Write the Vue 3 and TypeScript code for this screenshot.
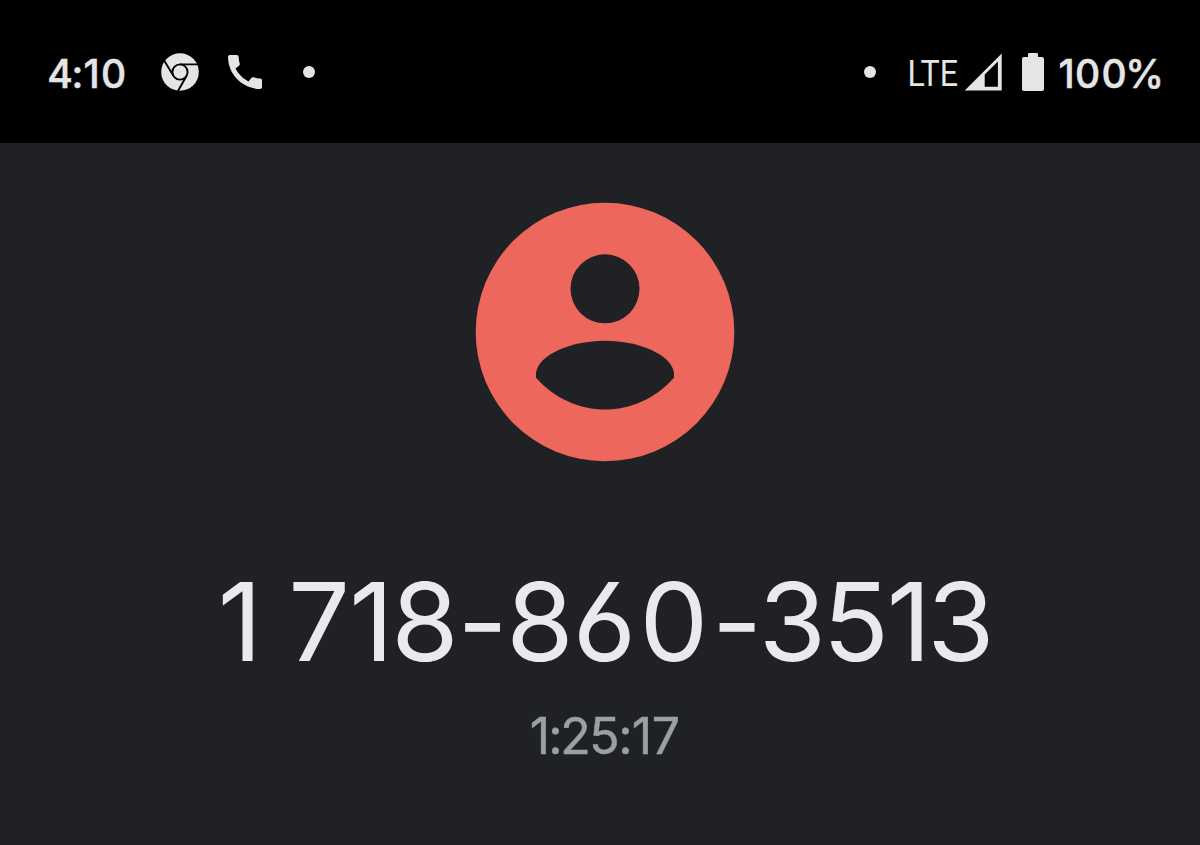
<script setup lang="ts">
const phoneNumber = '1 718-860-3513'
const duration = '1:25:17'
const clock = '4:10'
const battery = '100%'

const numberX = [20, 50, 99, 151.5, 205, 262.5, 320, 384.5, 454, 517, 572.5, 636, 689, 741].join(' ')
const durationX = [10, 25.5, 45.5, 74.5, 95.5, 112, 136].join(' ')
const clockX = [12, 29.5, 43.5, 65.5].join(' ')
const batteryX = [8.5, 29.5, 56, 86.5].join(' ')
</script>

<template>
  <main class="phone">
    <header class="status">
      <svg class="clock" width="78" height="48" viewBox="0 0 78 48">
        <text class="status-text" :x="clockX" y="39.5">{{ clock }}</text>
      </svg>
      <svg class="chrome" width="38" height="38" viewBox="-19 -19 38 38">
        <circle r="18.8" fill="#e5e5e5" />
        <g fill="none" stroke="#000" stroke-width="1.9">
          <circle r="7.6" />
          <path d="M0-7.6H19M-6.6 3.8-15.7-11.3M6.6 3.8-2 19" />
        </g>
      </svg>
      <svg class="call" width="34" height="34" viewBox="3 3 18 18">
        <path fill="#e5e5e5" d="M20.01 15.38c-1.23 0-2.42-.2-3.53-.56-.35-.12-.74-.03-1.01.24l-1.57 1.97c-2.83-1.35-5.48-3.9-6.89-6.83l1.95-1.66c.27-.28.35-.67.24-1.02-.37-1.11-.56-2.3-.56-3.53 0-.54-.45-.99-.99-.99H4.19C3.65 3 3 3.24 3 3.99 3 13.28 10.73 21 20.01 21c.71 0 .99-.63.99-1.18v-3.45c0-.54-.45-.99-.99-.99z" />
      </svg>
      <i class="dot"></i>
      <span class="space"></span>
      <i class="dot"></i>
      <svg class="lte" width="50" height="48" viewBox="0 0 50 48">
        <text x="-1.5" y="37.5" textLength="50.5" lengthAdjust="spacingAndGlyphs">LTE</text>
      </svg>
      <svg class="signal" width="38" height="38" viewBox="0 0 38 38">
        <path fill="#e5e5e5" fill-rule="evenodd" d="M.7 37.5 37.7.5v37zM20.7 21.6v12.2H33.9V8.5z" />
      </svg>
      <svg class="cell" width="22" height="38" viewBox="0 0 22 38">
        <path fill="#e5e5e5" d="M7 0h8q1 0 1 1v3h4q2 0 2 2v30q0 2-2 2H2q-2 0-2-2V6q0-2 2-2h4V1q0-1 1-1z" />
      </svg>
      <svg class="level" width="106" height="48" viewBox="0 0 106 48">
        <text class="status-text" :x="batteryX" y="39.5">{{ battery }}</text>
      </svg>
    </header>
    <section class="caller">
      <svg class="avatar" width="260" height="260" viewBox="-130 -130 260 260">
        <circle r="129.3" fill="#ee675c" />
        <circle cy="-43.2" r="34.5" fill="#202124" />
        <path fill="#202124" d="M-69 45.8V41C-67 23-34 8.8 0 8.8S67 23 69 41V45.8C50 67 25 77.6 0 77.6S-50 67-69 45.8z" />
      </svg>
      <svg class="number" width="770" height="110" viewBox="0 0 770 110">
        <text :x="numberX" y="96" xml:space="preserve">{{ phoneNumber }}</text>
      </svg>
      <svg class="duration" width="150" height="56" viewBox="0 0 150 56">
        <text :x="durationX" y="46.5">{{ duration }}</text>
      </svg>
    </section>
  </main>
</template>

<style>
body {
  margin: 0;
  background: #202124;
}
</style>

<style scoped>
.phone {
  width: 1200px;
  height: 845px;
  overflow: hidden;
  background: #202124;
  font-family: Inter, Roboto, sans-serif;
}
svg {
  display: block;
  flex: none;
  overflow: visible;
}
text {
  text-anchor: middle;
  font-feature-settings: 'cv03', 'cv04';
}
.status {
  box-sizing: border-box;
  height: 143px;
  padding: 0 36px 0 48px;
  display: flex;
  align-items: center;
  background: #000;
}
.status-text {
  font-size: 39px;
  font-weight: 500;
  fill: #e5e5e5;
  stroke: #e5e5e5;
  stroke-width: 0.5px;
}
.clock {
  margin-right: 35px;
}
.call {
  margin-left: 29px;
}
.dot {
  width: 12px;
  height: 12px;
  margin-left: 41px;
  border-radius: 50%;
  background: #e5e5e5;
}
.space {
  flex: 1;
}
.lte {
  margin-left: 33px;
}
.lte text {
  font-family: Roboto, sans-serif;
  font-size: 37px;
  text-anchor: start;
  fill: #e5e5e5;
}
.signal {
  margin-left: 5px;
}
.cell {
  margin-left: 20px;
}
.level {
  margin-left: 14px;
}
.caller {
  height: 702px;
  display: flex;
  flex-direction: column;
  align-items: center;
}
.avatar {
  margin-top: 59px;
  margin-left: 9px;
}
.number {
  margin-top: 103px;
  margin-left: 10px;
}
.number text {
  font-size: 109px;
  fill: #e8eaed;
}
.duration {
  margin-top: 32px;
  margin-left: 10px;
}
.duration text {
  font-size: 50px;
  fill: #9aa0a6;
  stroke: #9aa0a6;
  stroke-width: 0.5px;
}
</style>
